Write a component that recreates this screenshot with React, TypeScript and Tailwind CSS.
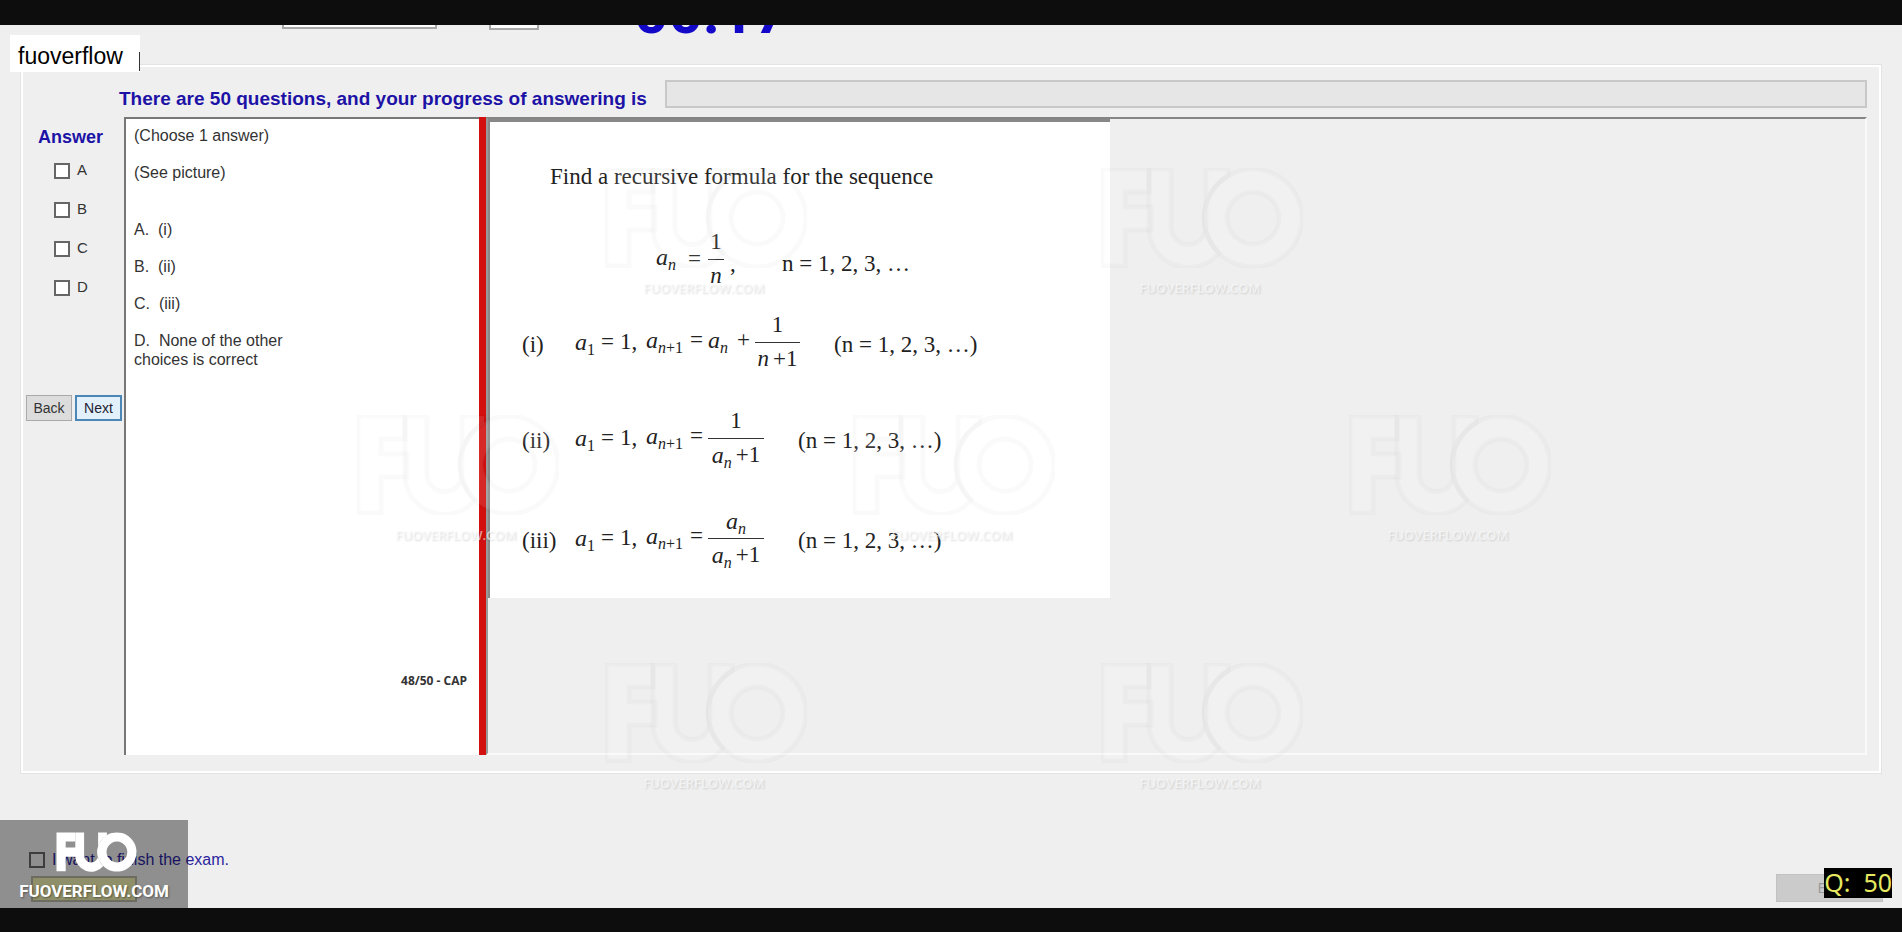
import React from "react";

function LogoShapes() {
  return (
    <>
      <path d="M1 1H48V24H24V39H50V62H24V98H1Z" />
      <path d="M48 1H70V59A17.5 17.5 0 0 0 105 59V1H127V8A49 49 0 0 0 118 85A39.5 39.5 0 0 1 48 59Z" />
      <path
        fillRule="evenodd"
        d="M152 1A49 49 0 1 1 151.9 1ZM152 24A26 26 0 1 0 152.1 24Z"
      />
    </>
  );
}

function Watermark({ place }: { place: string }) {
  return (
    <div className={`absolute flex w-[202px] flex-col items-center ${place}`}>
      <svg
        viewBox="0 0 202 100"
        className="h-[100px] w-[202px] fill-white/10 stroke-black/[0.018] stroke-[5]"
        aria-hidden="true"
      >
        <LogoShapes />
      </svg>
      <span className="mt-[10px] pr-1 font-['Open_Sans',sans-serif] text-[13px] leading-5 font-semibold text-white/60 [text-shadow:1px_1px_2px_rgb(0_0_0/0.14)]">
        FUOVERFLOW.COM
      </span>
    </div>
  );
}

function V({ sub, name = "a" }: { sub: string; name?: string }) {
  return (
    <span className="flex h-[26px] text-2xl leading-[26px]">
      <i>{name}</i>
      <span className="pt-[13px] text-base leading-4">
        {sub === "1" ? "1" : <i>n</i>}
        {sub === "n+1" && "+1"}
      </span>
    </span>
  );
}

function Frac({ top, bottom, width }: { top: React.ReactNode; bottom: React.ReactNode; width: string }) {
  return (
    <span className={`flex shrink-0 flex-col items-center ${width}`}>
      <span className="mb-1 flex h-[26px] justify-center">{top}</span>
      <span className="h-px w-full bg-[#333]" />
      <span className="mt-[3px] flex h-[26px] justify-center gap-1 whitespace-nowrap">{bottom}</span>
    </span>
  );
}

function Option({ label, children }: { label: string; children: React.ReactNode }) {
  return (
    <div className="flex h-[60px] items-center">
      <span className="w-[53px] pt-[6px]">{label}</span>
      <span className="flex items-center">
        <span className="w-[26px]"><V sub="1" /></span>
        <span className="w-[19px]">=</span>
        <span className="w-[26px]">1,</span>
      </span>
      <span className="flex items-center pb-1">
        <span className="w-[44px]"><V sub="n+1" /></span>
        <span className="w-[18px]">=</span>
      </span>
      {children}
      <span className="pt-[6px] pl-[34px]">(n = 1, 2, 3, …)</span>
    </div>
  );
}

const box = "size-4 shrink-0 appearance-none border-2 border-[#666] checked:bg-[#666]";

export default function App() {
  return (
    <div className="flex min-h-screen flex-col bg-[#0d0d0d] font-['Liberation_Sans',Arial,sans-serif] text-[#333]">
      <div className="h-[25px] shrink-0" />
      <div className="relative flex flex-1 flex-col overflow-hidden bg-[#efefef]">
        <header className="flex h-10 shrink-0 items-start overflow-hidden pl-[282px]">
          <select aria-label="Font" className="-mt-5 h-6 w-[155px] border-2 border-[#a8a8a8] bg-white" />
          <select aria-label="Size" className="-mt-5 ml-[52px] h-[25px] w-[50px] border-2 border-[#a8a8a8] bg-white" />
          <div className="-mt-[42px] ml-[95px] font-[Roboto,sans-serif] text-[60px] leading-[60px] font-bold text-[#1408c8]">
            00:17
          </div>
        </header>

        <main className="mr-[21px] ml-[21px] border-2 border-white pt-[13px] pr-3 pb-4 shadow-[0_0_0_1px_#e3e3e3]">
          <div className="mb-2 flex h-[29px] items-end pl-24">
            <h1 className="mr-[18px] shrink-0 text-[19px] leading-5 font-bold text-[#1d12a6]">
              There are 50 questions, and your progress of answering is
            </h1>
            <div
              role="progressbar"
              aria-label="Progress"
              aria-valuenow={0}
              className="h-7 flex-1 self-start border-2 border-[#c8c8c8] bg-[#e6e6e6]"
            />
          </div>

          <div className="flex min-h-[638px]">
            <div className="w-[101px] shrink-0 pt-[10px] pl-[3px]">
              <h2 className="pl-3 text-lg leading-5 font-bold text-[#1d12a6]">Answer</h2>
              <div className="mt-4 flex flex-col gap-[23px] pl-7">
                {["A", "B", "C", "D"].map((c) => (
                  <label key={c} className="flex h-4 items-start gap-[7px] text-[15px] leading-[14px]">
                    <input type="checkbox" className={`${box} bg-white`} />
                    {c}
                  </label>
                ))}
              </div>
              <div className="mt-[99px] flex gap-[3px] text-sm leading-4">
                <button className="h-[26px] w-[46px] border border-[#aaa] bg-[#dcdcdc]">Back</button>
                <button className="h-[26px] w-[47px] border-2 border-[#4c86b4] bg-[#e2f0fb] text-[#223]">Next</button>
              </div>
            </div>

            <section className="flex w-[355px] shrink-0 flex-col border-t-2 border-l-2 border-[#777] bg-white pt-[7px] pl-2 text-base leading-[19px]">
              <p>(Choose 1 answer)</p>
              <p className="mt-[18px]">(See picture)</p>
              <p className="mt-[38px]">A.&nbsp; (i)</p>
              <p className="mt-[18px]">B.&nbsp; (ii)</p>
              <p className="mt-[18px]">C.&nbsp; (iii)</p>
              <p className="mt-[18px]">
                D.&nbsp; None of the other
                <br />
                choices is correct
              </p>
              <p className="mt-auto mr-3 mb-[66px] text-right font-['Open_Sans',sans-serif] text-xs leading-4 font-bold">
                48/50 - CAP
              </p>
            </section>

            <div className="w-[7px] shrink-0 bg-[#d21010]" />

            <section className="flex flex-1 items-start border-2 border-t-[#858585] border-r-[#f9f9f9] border-b-[#f9f9f9] border-l-[#999]">
              <div className="w-[622px] border-t-[3px] border-l-2 border-[#888] bg-white pt-[42px] pb-[30px] pl-8 font-['Liberation_Serif',serif] text-[23px] leading-[26px] whitespace-nowrap text-[#222]">
                <p className="pl-7">Find a recursive formula for the sequence</p>
                <div className="mt-[39px] flex h-[60px] items-center pl-[134px]">
                  <span className="w-8 pb-1"><V sub="n" /></span>
                  <span className="w-5">=</span>
                  <Frac width="w-4" top="1" bottom={<i>n</i>} />
                  <span className="w-[58px] pt-[10px] pl-[6px]">,</span>
                  <span className="pt-[10px]">n = 1, 2, 3, …</span>
                </div>
                <div className="mt-[23px]">
                  <Option label="(i)">
                    <span className="w-[29px] pb-1"><V sub="n" /></span>
                    <span className="w-[18px] pb-1">+</span>
                    <Frac width="w-[45px]" top="1" bottom={<><i>n</i><span>+1</span></>} />
                  </Option>
                </div>
                <div className="mt-[36px]">
                  <Option label="(ii)">
                    <Frac width="w-[56px]" top="1" bottom={<><V sub="n" /><span>+1</span></>} />
                  </Option>
                </div>
                <div className="mt-[40px]">
                  <Option label="(iii)">
                    <Frac width="w-[56px]" top={<V sub="n" />} bottom={<><V sub="n" /><span>+1</span></>} />
                  </Option>
                </div>
              </div>
            </section>
          </div>
        </main>

        <footer className="mt-auto flex h-[56px] shrink-0 items-start justify-between pr-[19px] pl-[29px]">
          <div>
            <label className="flex h-4 items-center gap-[7px] text-base leading-4 text-[#2b1f9e]">
              <input type="checkbox" className={box} />
              I want to finish the exam.
            </label>
            <button aria-label="Finish" className="mt-2 ml-[2px] block h-[26px] w-[106px] border-2 border-[#b5b5a0] bg-[#eeeeb0]" />
          </div>
          <button className="mt-[22px] h-7 w-[107px] border border-[#c2c2c2] bg-[#cbcbcb] text-sm text-[#999]">Exit</button>
        </footer>

        <div className="absolute top-[10px] left-[10px] h-[37px] w-[130px] bg-white pt-[7px] pl-2 text-[23px] leading-7 text-black">
          fuoverflow
        </div>
        <div className="absolute top-[27px] left-[139px] h-[19px] w-px bg-[#333]" />

        <div className="pointer-events-none absolute inset-0">
          <Watermark place="top-[143px] left-[605px]" />
          <Watermark place="top-[143px] left-[1101px]" />
          <Watermark place="top-[390px] left-[357px]" />
          <Watermark place="top-[390px] left-[853px]" />
          <Watermark place="top-[390px] left-[1349px]" />
          <Watermark place="top-[638px] left-[605px]" />
          <Watermark place="top-[638px] left-[1101px]" />
        </div>

        <div className="pointer-events-none absolute bottom-0 left-0 flex h-[88px] w-[188px] flex-col items-center bg-black/40 pt-3">
          <svg viewBox="0 0 202 100" className="ml-1 h-10 w-[81px] fill-white" aria-hidden="true">
            <LogoShapes />
          </svg>
          <span className="mt-[5px] font-[Roboto,sans-serif] text-[17px] leading-7 font-bold text-white [text-shadow:1px_1px_2px_rgb(0_0_0/0.4)]">
            FUOVERFLOW.COM
          </span>
        </div>

        <div className="absolute right-[10px] bottom-[10px] flex h-[30px] items-center bg-black pb-[2px] font-['Noto_Sans',sans-serif] text-[25px] leading-[28px] text-[#e6e860]">
          Q:&nbsp; 50
        </div>
      </div>
      <div className="h-6 shrink-0" />
    </div>
  );
}
